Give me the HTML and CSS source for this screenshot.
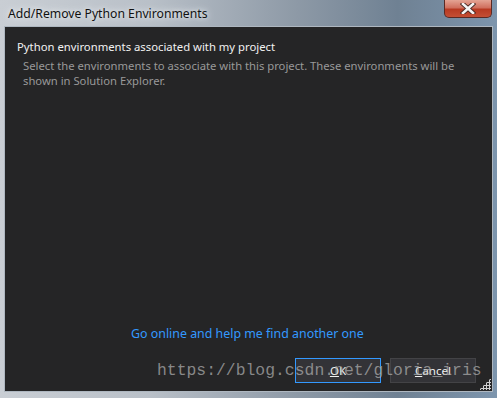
FILE: index.html
```html
<!DOCTYPE html>
<html lang="en">

<head>
  <meta charset="UTF-8">
  <title>Add/Remove Python Environments</title>
  <link rel="stylesheet" href="styles.css">
</head>

<body>
  <div class="window">
    <div class="titlebar">
      <span class="title">Add/Remove Python Environments</span>
      <button class="close" aria-label="Close">
        <svg width="16" height="11" viewBox="0 0 16 11">
          <path d="M3 1 L13 10 M13 1 L3 10" stroke="#4a2a25" stroke-width="4.4" stroke-linecap="square" />
          <path d="M3 1 L13 10 M13 1 L3 10" stroke="#f4f4f4" stroke-width="2.6" stroke-linecap="square" />
        </svg>
      </button>
    </div>

    <div class="content">
      <div class="heading">Python environments associated with my project</div>
      <div class="desc">Select the environments to associate with this project. These environments will be
        shown in Solution Explorer.</div>

      <div class="spacer"></div>

      <a class="link" href="#">Go online and help me find another one</a>

      <div class="buttons">
        <button class="btn primary"><u>O</u>K</button>
        <button class="btn"><u>C</u>ancel</button>
      </div>
      <div class="grip"></div>
    </div>
  </div>
  <div class="watermark">https://blog.csdn.net/gloria_iris</div>
</body>

</html>
```

FILE: styles.css
```css
html,
body {
  margin: 0;
  padding: 0;
}

body {
  width: 497px;
  height: 398px;
  overflow: hidden;
  font-family: "Noto Sans", "Open Sans", sans-serif;
  background: linear-gradient(90deg, #c9ced4 0%, #b9c0c8 30%, #8d99a6 60%, #6f8193 80%, #7d95ad 100%);
  position: relative;
}

.window {
  height: 398px;
  display: flex;
  flex-direction: column;
  padding: 0 4px 6px 4px;
  box-sizing: border-box;
}

.titlebar {
  height: 26px;
  display: flex;
  align-items: flex-start;
  justify-content: space-between;
  flex-shrink: 0;
}

.title {
  font-size: 12.2px;
  color: #111;
  margin: 5px 0 0 4px;
  text-shadow: 0 0 8px #e8ecef, 0 0 4px #e8ecef;
}

.close {
  width: 48px;
  height: 18px;
  margin-right: 1px;
  border: 1px solid #5a2a24;
  border-top: none;
  border-radius: 0 0 5px 5px;
  background: linear-gradient(180deg, #e4a494 0%, #d0705e 45%, #b83a22 55%, #c44f35 100%);
  display: flex;
  align-items: center;
  justify-content: center;
  padding: 0;
}

.content {
  flex: 1;
  background: #252526;
  border: 1px solid #aeb7c0;
  display: flex;
  flex-direction: column;
  padding: 0 12px;
  position: relative;
}

.heading {
  color: #f1f1f1;
  font-size: 11.3px;
  margin-top: 12px;
}

.desc {
  color: #999999;
  font-size: 11.25px;
  line-height: 15px;
  margin: 4px 0 0 6px;
  width: 450px;
}

.spacer {
  flex: 1;
}

.link {
  color: #3399ff;
  font-size: 12.4px;
  text-decoration: none;
  align-self: flex-start;
  margin-left: 114px;
  margin-bottom: 16px;
}

.buttons {
  display: flex;
  justify-content: flex-end;
  gap: 9px;
  margin-bottom: 8px;
  margin-right: 4px;
}

.btn {
  width: 86px;
  height: 25px;
  background: #333337;
  border: 1px solid #434346;
  color: #f1f1f1;
  font-family: "Noto Sans", "Open Sans", sans-serif;
  font-size: 11.6px;
  padding: 0;
}

.btn.primary {
  border-color: #3399ff;
}

.grip {
  position: absolute;
  right: 1px;
  bottom: 1px;
  width: 12px;
  height: 12px;
  background: radial-gradient(circle, #d0d0d0 1px, transparent 1.2px) 0 0 / 3px 3px;
  clip-path: polygon(100% 0, 100% 100%, 0 100%);
}

.watermark {
  position: absolute;
  left: 157px;
  top: 361px;
  font-family: "Liberation Mono", monospace;
  font-size: 16.4px;
  white-space: nowrap;
  color: rgba(170, 170, 170, 0.75);
  pointer-events: none;
}
```
